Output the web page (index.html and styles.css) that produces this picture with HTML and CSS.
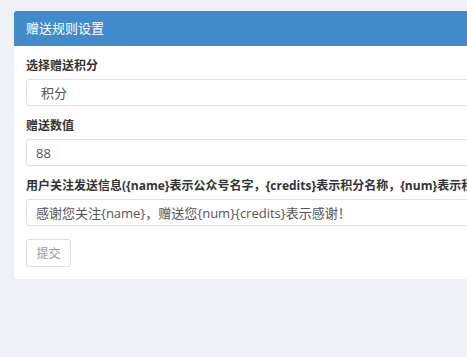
FILE: index.html
```html
<!DOCTYPE html>
<html lang="zh-CN">
<head>
  <meta charset="UTF-8">
  <meta name="viewport" content="width=device-width, initial-scale=1.0">
  <title>赠送规则设置</title>
  <link rel="stylesheet" href="styles.css">
</head>
<body>
  <div class="panel">
    <div class="panel-heading">赠送规则设置</div>
    <div class="panel-body">
      <form>
        <div class="form-group">
          <label class="form-label">选择赠送积分</label>
          <select class="form-control form-select">
            <option>积分</option>
            <option>余额</option>
          </select>
        </div>
        <div class="form-group">
          <label class="form-label">赠送数值</label>
          <input type="text" class="form-control" value="88">
        </div>
        <div class="form-group">
          <label class="form-label">用户关注发送信息({name}表示公众号名字，{credits}表示积分名称，{num}表示积分数量)</label>
          <input type="text" class="form-control" value="感谢您关注{name}，赠送您{num}{credits}表示感谢！">
        </div>
        <button type="button" class="btn">提交</button>
      </form>
    </div>
  </div>
</body>
</html>
```

FILE: styles.css
```css
html, body {
  overflow: hidden;
}
body {
  margin: 0;
  padding: 11px 14px;
  background-color: #f0f1f6;
  color: #333;
  font-family: "Open Sans", "Noto Sans CJK SC", sans-serif;
  font-size: 13px;
}
.panel {
  width: 720px;
  background-color: #fff;
  border-radius: 3px;
}
.panel-heading {
  height: 35px;
  line-height: 34px;
  padding: 0 12px;
  background-color: #428bca;
  color: #fff;
  font-size: 13px;
  border-radius: 3px 3px 0 0;
}
.panel-body {
  padding: 11px 12px 12px;
}
.form-group {
  margin-bottom: 11px;
}
.form-label {
  display: block;
  font-size: 12px;
  font-weight: bold;
  line-height: 18px;
  margin-bottom: 4px;
  white-space: nowrap;
}
.form-control {
  display: block;
  width: 100%;
  height: 27px;
  box-sizing: border-box;
  padding: 0 9px;
  border: 1px solid #e0e0e0;
  border-radius: 3px;
  background-color: #fff;
  color: #555;
  font-family: inherit;
  font-size: 13px;
  outline: none;
}
.form-select {
  padding-left: 10px;
}
.btn {
  margin-top: 2px;
  height: 28px;
  padding: 0 9.5px;
  border: 1px solid #ddd;
  border-radius: 3px;
  background-color: #fff;
  color: #999;
  font-family: inherit;
  font-size: 12px;
  cursor: pointer;
}
```
